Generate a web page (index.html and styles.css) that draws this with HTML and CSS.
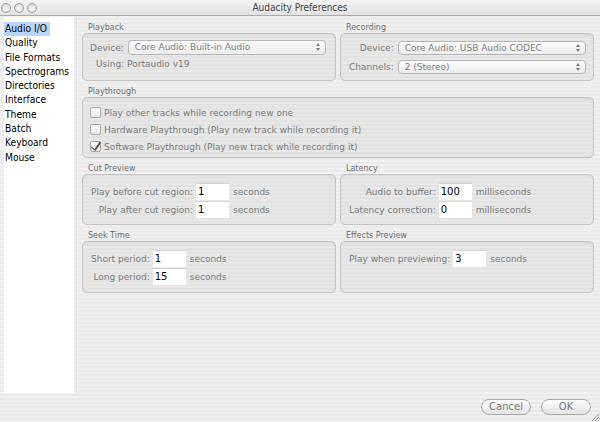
FILE: index.html
```html
<!DOCTYPE html>
<html>
<head>
<meta charset="utf-8">
<title>Audacity Preferences</title>
<link rel="stylesheet" href="styles.css">
</head>
<body>
<div class="window">
  <div class="titlebar">
    <div class="lights"><span></span><span></span><span></span></div>
    <div class="title">Audacity Preferences</div>
  </div>
  <div class="main">
    <ul class="sidebar">
      <li class="selected">Audio I/O</li>
      <li>Quality</li>
      <li>File Formats</li>
      <li>Spectrograms</li>
      <li>Directories</li>
      <li>Interface</li>
      <li>Theme</li>
      <li>Batch</li>
      <li>Keyboard</li>
      <li>Mouse</li>
    </ul>
    <div class="content">
      <div class="groups">
        <section class="group">
          <div class="glabel">Playback</div>
          <div class="box box-playback">
            <div class="devrow">
              <span class="lbl">Device:</span>
              <div class="select"><span>Core Audio: Built-in Audio</span><i class="arrows"></i></div>
            </div>
            <div class="using">Using: Portaudio v19</div>
          </div>
        </section>
        <section class="group">
          <div class="glabel">Recording</div>
          <div class="box box-recording">
            <div class="selgrid">
              <span class="lbl">Device:</span>
              <div class="select"><span>Core Audio: USB Audio CODEC</span><i class="arrows"></i></div>
              <span class="lbl">Channels:</span>
              <div class="select"><span>2 (Stereo)</span><i class="arrows"></i></div>
            </div>
          </div>
        </section>
        <section class="group span2">
          <div class="glabel">Playthrough</div>
          <div class="box box-playthrough">
            <label class="check"><i class="cb"></i>Play other tracks while recording new one</label>
            <label class="check"><i class="cb"></i>Hardware Playthrough (Play new track while recording it)</label>
            <label class="check"><i class="cb checked"></i>Software Playthrough (Play new track while recording it)</label>
          </div>
        </section>
        <section class="group">
          <div class="glabel">Cut Preview</div>
          <div class="box box-cut">
            <div class="form">
              <span class="lbl">Play before cut region:</span><span class="input">1</span><span class="unit">seconds</span>
              <span class="lbl">Play after cut region:</span><span class="input">1</span><span class="unit">seconds</span>
            </div>
          </div>
        </section>
        <section class="group">
          <div class="glabel">Latency</div>
          <div class="box box-cut">
            <div class="form">
              <span class="lbl">Audio to buffer:</span><span class="input">100</span><span class="unit">milliseconds</span>
              <span class="lbl">Latency correction:</span><span class="input">0</span><span class="unit">milliseconds</span>
            </div>
          </div>
        </section>
        <section class="group">
          <div class="glabel">Seek Time</div>
          <div class="box box-seek">
            <div class="form">
              <span class="lbl">Short period:</span><span class="input">1</span><span class="unit">seconds</span>
              <span class="lbl">Long period:</span><span class="input">15</span><span class="unit">seconds</span>
            </div>
          </div>
        </section>
        <section class="group">
          <div class="glabel">Effects Preview</div>
          <div class="box box-seek">
            <div class="form">
              <span class="lbl">Play when previewing:</span><span class="input">3</span><span class="unit">seconds</span>
            </div>
          </div>
        </section>
      </div>
    </div>
  </div>
  <div class="footer">
    <button class="btn">Cancel</button>
    <button class="btn">OK</button>
  </div>
  <svg class="grip" width="10" height="10" viewBox="0 0 10 10">
    <path d="M9 2 L2 9 M9 5 L5 9 M9 8 L8 9" stroke="#9a9a9a" stroke-width="1" fill="none"/>
  </svg>
</div>
</body>
</html>
```

FILE: styles.css
```css
* { box-sizing: border-box; }
html, body { margin: 0; padding: 0; }
body {
  width: 600px;
  height: 422px;
  overflow: hidden;
  font-family: "DejaVu Sans", sans-serif;
  font-size: 9px;
  color: #7c7c7c;
}
.window {
  position: relative;
  width: 600px;
  height: 422px;
  display: flex;
  flex-direction: column;
  background: repeating-linear-gradient(to bottom, #f0f0f0 0 2px, #eaeaea 2px 4px);
}
.titlebar {
  height: 16px;
  flex: none;
  display: flex;
  align-items: center;
  position: relative;
  background: linear-gradient(#f3f3f3, #e2e2e2);
  border-bottom: 1px solid #a9a9a9;
}
.lights {
  display: flex;
  gap: 3px;
  padding-left: 1px;
}
.lights span {
  width: 10px;
  height: 10px;
  border-radius: 50%;
  border: 1px solid #9d9d9d;
  background: radial-gradient(circle at 50% 70%, #f8f8f8, #d2d2d2);
}
.title {
  position: absolute;
  left: 0;
  right: 0;
  text-align: center;
  font-family: "DejaVu Sans Condensed", "DejaVu Sans", sans-serif;
  font-size: 10px;
  color: #444;
}
.main {
  flex: none;
  height: 378px;
  display: flex;
}
.sidebar {
  list-style: none;
  margin: 1px 0 1px 4px;
  padding: 5px 0 0 0;
  width: 71px;
  background: #fff;
  font-family: "DejaVu Sans Condensed", "DejaVu Sans", sans-serif;
  font-size: 10.2px;
  color: #000;
}
.sidebar li {
  height: 14.3px;
  line-height: 13px;
  padding-left: 1px;
}
.sidebar li.selected {
  width: 46px;
  background: #b9d5fc;
}
.content {
  flex: 1;
  margin-left: 2px;
  padding: 5px 6px 0 5px;
  border-left: 1px solid #e2e2e2;
}
.groups {
  display: grid;
  grid-template-columns: 254px 254px;
  column-gap: 4px;
  row-gap: 4px;
}
.span2 { grid-column: 1 / span 2; }
.glabel {
  height: 12px;
  line-height: 12px;
  padding-top: 1px;
  font-size: 8px;
  color: #6e6e6e;
  padding-left: 6px;
}
.box {
  border: 1px solid #c3c3c3;
  border-radius: 5px;
  background: repeating-linear-gradient(to bottom, #e7e7e7 0 2px, #e2e2e2 2px 4px);
  box-shadow: inset 0 1px 2px rgba(0,0,0,0.06);
}
.box-playback { height: 48px; padding: 6px 9px 0 7px; }
.box-recording { height: 48px; padding: 7px 7px 0 8px; }
.box-playthrough { height: 61px; padding: 6px 0 0 7px; }
.box-cut { height: 51px; padding: 8px 0 0 8px; }
.box-seek { height: 52px; padding: 8px 0 0 8px; }

.devrow {
  display: flex;
  align-items: center;
  gap: 4px;
}
.devrow .select { flex: 1; height: 15px; }
.using {
  margin-top: 3px;
  padding-left: 6px;
  line-height: 12px;
}
.selgrid {
  display: grid;
  grid-template-columns: auto 1fr;
  column-gap: 4px;
  row-gap: 5px;
  align-items: center;
}
.lbl { text-align: right; white-space: nowrap; }
.select {
  position: relative;
  height: 14px;
  border: 1px solid #b7b7b7;
  border-radius: 4px;
  background: linear-gradient(#fbfbfb, #ececec);
  line-height: 12px;
  padding-left: 6px;
  color: #808080;
}
.arrows {
  position: absolute;
  right: 5px;
  top: 2px;
  width: 4px;
  height: 8px;
}
.arrows::before, .arrows::after {
  content: "";
  position: absolute;
  left: 0;
  border-left: 2px solid transparent;
  border-right: 2px solid transparent;
}
.arrows::before { top: 0; border-bottom: 3px solid #777; }
.arrows::after { bottom: 0; border-top: 3px solid #777; }

.check {
  display: flex;
  align-items: center;
  height: 17px;
  gap: 3px;
}
.cb {
  position: relative;
  width: 11px;
  height: 11px;
  border: 1px solid #ababab;
  border-radius: 2px;
  background: linear-gradient(#fdfdfd, #e6e6e6);
}
.cb.checked::after {
  content: "";
  position: absolute;
  left: 2px;
  top: -2px;
  width: 4px;
  height: 9px;
  border-right: 2px solid #555;
  border-bottom: 1px solid #555;
  transform: rotate(35deg);
}
.form {
  display: grid;
  grid-template-columns: auto 33px auto;
  column-gap: 3px;
  row-gap: 1px;
  justify-content: start;
  align-items: center;
}
.input {
  height: 17px;
  line-height: 16px;
  background: #fff;
  padding-left: 2px;
  color: #000;
  font-size: 10px;
  border-top: 1px solid #d4d4d4;
}
.unit { padding-left: 1px; }

.footer {
  flex: 1;
  display: flex;
  justify-content: flex-end;
  align-items: flex-start;
  gap: 10px;
  padding: 5px 9px 0 0;
}
.btn {
  width: 50px;
  height: 16px;
  border: 1px solid #a8a8a8;
  border-radius: 8px;
  background: linear-gradient(#fcfcfc, #e3e3e3);
  font-family: "DejaVu Sans", sans-serif;
  font-size: 10px;
  color: #7a7a7a;
  padding: 0;
  line-height: 14px;
}
.grip {
  position: absolute;
  right: 0;
  bottom: 0;
}
```
